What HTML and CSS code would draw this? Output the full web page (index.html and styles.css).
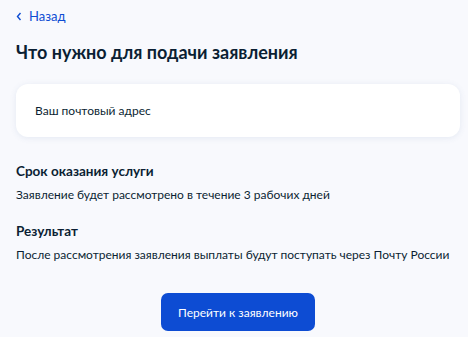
FILE: index.html
```html
<!DOCTYPE html>
<html lang="ru">
  <head>
    <meta charset="UTF-8" />
    <meta name="viewport" content="width=device-width, initial-scale=1.0" />
    <title>Что нужно для подачи заявления</title>
    <link rel="stylesheet" href="styles.css">
  </head>
  <body>
    <div class="page">
      <a class="back" href="#">
        <svg width="6" height="9" viewBox="0 0 6 9"><path d="M4.5 1 1.5 4.5 4.5 8" fill="none" stroke="#0d4cd3" stroke-width="1.4"/></svg>
        Назад
      </a>

      <h1 class="title">Что нужно для подачи заявления</h1>

      <div class="card">Ваш почтовый адрес</div>

      <div class="section first">
        <h2>Срок оказания услуги</h2>
        <p>Заявление будет рассмотрено в течение 3 рабочих дней</p>
      </div>

      <div class="section">
        <h2>Результат</h2>
        <p>После рассмотрения заявления выплаты будут поступать через Почту России</p>
      </div>

      <div class="actions">
        <button class="btn">Перейти к заявлению</button>
      </div>
    </div>
  </body>
</html>
```

FILE: styles.css
```css
* {
  font-family: Lato, "Noto Sans", sans-serif;
  box-sizing: border-box;
}

body {
  margin: 0;
  background-color: #f8f9fd;
  color: #0b1f33;
}

.page {
  padding: 8px 8px 0 16px;
}

.back {
  display: flex;
  align-items: center;
  gap: 7px;
  height: 16px;
  font-size: 13px;
  color: #0d4cd3;
  text-decoration: none;
}

.title {
  margin: 16px 0 0;
  font-size: 18px;
  font-weight: 700;
  line-height: 24px;
}

.card {
  margin-top: 20px;
  height: 53px;
  padding: 0 19px;
  display: flex;
  align-items: center;
  background: #fff;
  border-radius: 12px;
  box-shadow: 0 1px 6px rgba(86, 113, 166, 0.12);
  font-size: 12px;
}

.section h2 {
  margin: 0;
  font-size: 13.5px;
  font-weight: 700;
  line-height: 20px;
}

.section p {
  margin: 6px 0 0;
  font-size: 12px;
  line-height: 16px;
}

.section.first {
  margin-top: 24px;
}

.section + .section {
  margin-top: 18px;
}

.actions {
  display: flex;
  justify-content: center;
  margin-top: 30px;
}

.btn {
  width: 154px;
  height: 38px;
  border: 0;
  border-radius: 7px;
  background: #0d4cd3;
  color: #fff;
  font-size: 12px;
}
```
